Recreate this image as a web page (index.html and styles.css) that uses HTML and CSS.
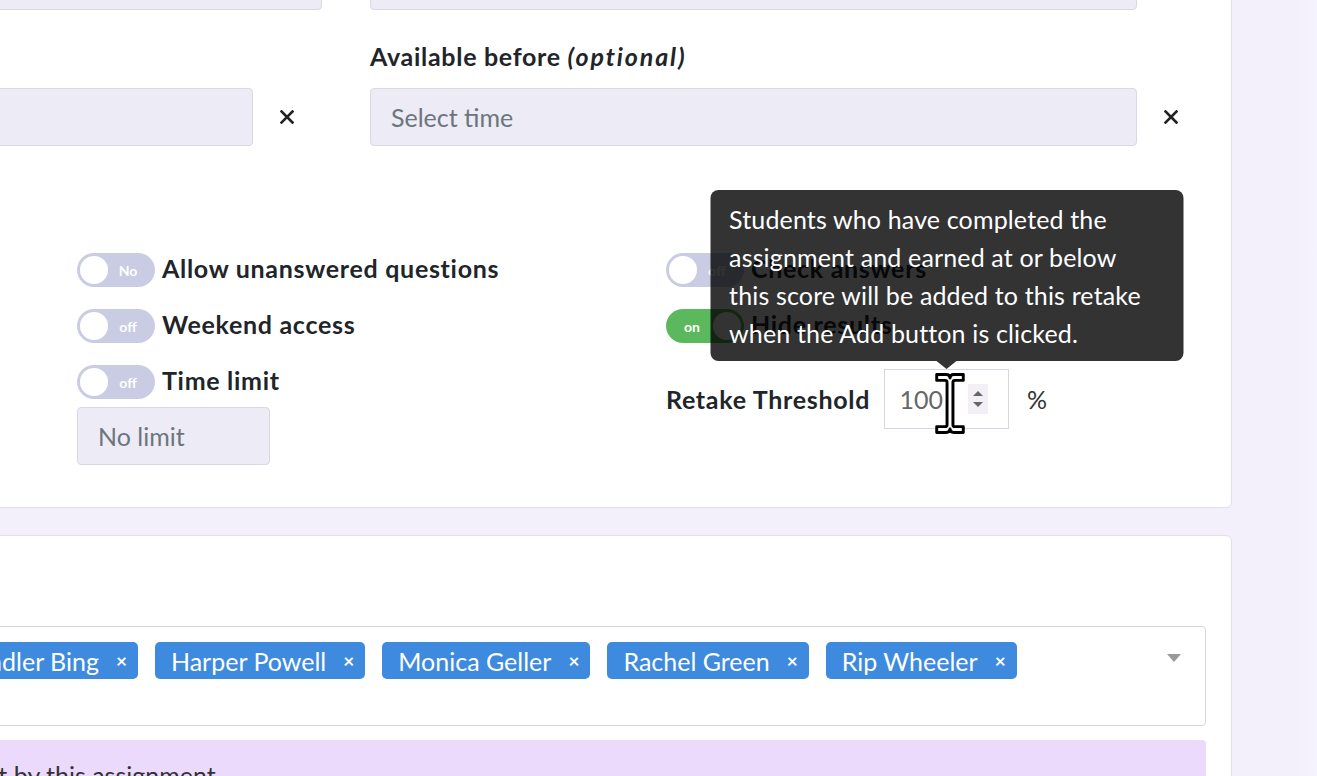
FILE: index.html
```html
<!DOCTYPE html>
<html lang="en">
<head>
<meta charset="utf-8">
<title>Retake settings</title>
<link rel="stylesheet" href="styles.css">
</head>
<body>
<div class="page">
  <main class="main">
    <section class="card card-settings">
      <div class="date-grid">
        <div class="cell"><div class="input input-full"></div></div>
        <div class="cell"><div class="input input-date"></div></div>
        <div class="cell"></div>
        <div class="cell"><div class="field-label">Available before <em>(optional)</em></div></div>
        <div class="cell field-row">
          <div class="input input-left"></div>
          <button class="clear" type="button" aria-label="Clear"><svg viewBox="0 0 14 14" width="14" height="14"><path d="M1.5 1.5 L12.5 12.5 M12.5 1.5 L1.5 12.5" stroke="#222" stroke-width="2.6" stroke-linecap="square"/></svg></button>
        </div>
        <div class="cell field-row">
          <div class="input input-date">Select time</div>
          <button class="clear" type="button" aria-label="Clear"><svg viewBox="0 0 14 14" width="14" height="14"><path d="M1.5 1.5 L12.5 12.5 M12.5 1.5 L1.5 12.5" stroke="#222" stroke-width="2.6" stroke-linecap="square"/></svg></button>
        </div>
      </div>

      <div class="options">
        <div class="opt-col">
          <div class="toggle-list">
            <div class="toggle-row"><span class="toggle"><span class="knob"></span><span class="toggle-text">No</span></span><span class="opt-label">Allow unanswered questions</span></div>
            <div class="toggle-row"><span class="toggle"><span class="knob"></span><span class="toggle-text">off</span></span><span class="opt-label">Weekend access</span></div>
            <div class="toggle-row"><span class="toggle"><span class="knob"></span><span class="toggle-text">off</span></span><span class="opt-label">Time limit</span></div>
          </div>
          <div class="input no-limit">No limit</div>
        </div>
        <div class="opt-col">
          <div class="toggle-list">
            <div class="toggle-row"><span class="toggle"><span class="knob"></span><span class="toggle-text">off</span></span><span class="opt-label">Check answers</span></div>
            <div class="toggle-row"><span class="toggle toggle-on"><span class="toggle-text">on</span><span class="knob"></span></span><span class="opt-label">Hide results</span></div>
          </div>
          <div class="retake">
            <span class="retake-label">Retake Threshold</span>
            <div class="num">
              <span class="num-value">100</span>
              <span class="spinner"><span class="up"></span><span class="down"></span></span>
              <div class="tooltip">Students who have completed the<br>assignment and earned at or below<br>this score will be added to this retake<br>when the Add button is clicked.</div>
              <svg class="cursor" viewBox="0 0 30 62" width="30" height="61"><path d="M1.5 1.5 H11 Q15 1.5 15 5 Q15 1.5 19 1.5 H28.5 V7.5 H20 Q18 7.5 18 9.5 V52.5 Q18 54.5 20 54.5 H28.5 V60.5 H19 Q15 60.5 15 57 Q15 60.5 11 60.5 H1.5 V54.5 H10 Q12 54.5 12 52.5 V9.5 Q12 7.5 10 7.5 H1.5 Z" fill="#fff" stroke="#000" stroke-width="3" stroke-linejoin="round"/></svg>
            </div>
            <span class="pct">%</span>
          </div>
        </div>
      </div>
    </section>

    <section class="card card-students">
      <div class="field-label">Students</div>
      <div class="multi">
        <span class="tag">Chandler Bing<span class="x">×</span></span>
        <span class="tag">Harper Powell<span class="x">×</span></span>
        <span class="tag">Monica Geller<span class="x">×</span></span>
        <span class="tag">Rachel Green<span class="x">×</span></span>
        <span class="tag">Rip Wheeler<span class="x">×</span></span>
        <span class="caret"></span>
      </div>
      <div class="note">The retake was set by this assignment.</div>
    </section>
  </main>
</div>
</body>
</html>
```

FILE: styles.css
```css
html, body {
  margin: 0;
  padding: 0;
}
body {
  width: 1317px;
  height: 776px;
  overflow: hidden;
  background: linear-gradient(to right, #f3f0fc 0, #f3f0fc 1295px, #f5f3fd 1317px);
  font-family: Lato, "Liberation Sans", sans-serif;
  color: #212529;
}
.page {
  display: flex;
  margin-left: -330px;
  margin-top: -78px;
}
.main {
  width: 1562px;
  flex: none;
}
.card {
  background: #fff;
  border: 1px solid #e2def0;
  border-radius: 6px;
  box-sizing: border-box;
}
.card-settings {
  padding: 29px 42px 42px 39px;
}
.card-students {
  margin-top: 27px;
  padding: 40px 25px 30px 39px;
}

/* date fields */
.date-grid {
  display: grid;
  grid-template-columns: 612px 1fr;
  column-gap: 48px;
}
.field-row {
  display: flex;
  align-items: center;
}
.field-label {
  font-size: 25px;
  line-height: 30px;
  font-weight: 700;
  letter-spacing: 0.7px;
  color: #212529;
}
.field-label em {
  font-style: italic;
  letter-spacing: 1.9px;
}
.date-grid .field-label {
  margin-top: 31px;
  margin-bottom: 17px;
}
.input {
  height: 58px;
  box-sizing: border-box;
  background: #ecebf6;
  border: 1px solid #d9d8e4;
  border-radius: 4px;
  display: flex;
  align-items: center;
  padding: 0 20px;
  font-size: 25px;
  color: #6c757d;
  flex: none;
}
.input-full { width: 612px; }
.input-date { width: 767px; }
.input-left { width: 543px; }
.clear {
  width: 36px;
  height: 36px;
  margin-left: 16px;
  padding: 0;
  border: 0;
  background: transparent;
  display: flex;
  align-items: center;
  justify-content: center;
  flex: none;
}

/* toggles */
.options {
  display: grid;
  grid-template-columns: 589px 1fr;
  margin: 107px 0 0 367px;
}
.opt-col {
  display: flex;
  flex-direction: column;
  align-items: flex-start;
}
.toggle-list {
  display: flex;
  flex-direction: column;
  gap: 22px;
}
.toggle-row {
  display: flex;
  align-items: center;
  gap: 7px;
  height: 34px;
  font-size: 25px;
  font-weight: 700;
  letter-spacing: 0.7px;
  color: #212529;
}
.opt-label {
  padding-bottom: 5px;
}
.toggle {
  width: 78px;
  height: 34px;
  border-radius: 17px;
  background: #c9cce3;
  display: flex;
  align-items: center;
  box-sizing: border-box;
  padding: 0 3px;
  flex: none;
  letter-spacing: 0;
}
.knob {
  width: 28px;
  height: 28px;
  border-radius: 50%;
  background: #fff;
  flex: none;
}
.toggle-text {
  flex: 1;
  text-align: center;
  font-size: 14px;
  font-weight: 700;
  color: #fff;
  padding-right: 4px;
}
.toggle-on {
  background: #5cb85c;
}
.toggle-on .toggle-text {
  padding: 0 0 0 2px;
}
.no-limit {
  width: 193px;
  margin-top: 8px;
}

/* retake threshold */
.retake {
  display: flex;
  align-items: center;
  margin-top: 26px;
}
.retake-label {
  font-size: 25px;
  font-weight: 700;
  letter-spacing: 0.7px;
}
.num {
  position: relative;
  margin-left: 14px;
  width: 125px;
  height: 60px;
  box-sizing: border-box;
  border: 1px solid #d8d6e0;
  background: #fff;
  display: flex;
  align-items: center;
  justify-content: flex-end;
  padding-right: 20px;
}
.num-value {
  font-size: 25px;
  color: #666;
}
.spinner {
  margin-left: 25px;
  width: 20px;
  height: 30px;
  background: #f2eff5;
  display: flex;
  flex-direction: column;
  align-items: center;
  justify-content: center;
  gap: 6px;
}
.spinner .up {
  width: 0;
  height: 0;
  border-left: 5px solid transparent;
  border-right: 5px solid transparent;
  border-bottom: 5px solid #666;
}
.spinner .down {
  width: 0;
  height: 0;
  border-left: 5px solid transparent;
  border-right: 5px solid transparent;
  border-top: 5px solid #666;
}
.pct {
  margin-left: 18px;
  font-size: 25px;
  color: #333;
}
.tooltip {
  position: absolute;
  bottom: calc(100% + 9px);
  left: 50%;
  transform: translateX(-50%);
  width: 473px;
  box-sizing: border-box;
  padding: 10px 19px 9px;
  background: rgba(0, 0, 0, 0.8);
  color: #fff;
  border-radius: 8px;
  font-size: 25px;
  letter-spacing: 0.15px;
  line-height: 38px;
  white-space: nowrap;
}
.tooltip::after {
  content: "";
  position: absolute;
  top: 100%;
  left: 50%;
  margin-left: -10px;
  border-left: 10px solid transparent;
  border-right: 10px solid transparent;
  border-top: 8px solid rgba(0, 0, 0, 0.8);
}
.cursor {
  position: absolute;
  left: 50px;
  top: 3px;
}

/* students */
.card-students .field-label {
  margin-bottom: 20px;
}
.multi {
  position: relative;
  min-height: 100px;
  box-sizing: border-box;
  border: 1px solid #d9d6e3;
  border-radius: 4px;
  padding: 15px 60px 15px 218px;
  display: flex;
  flex-wrap: wrap;
  align-content: flex-start;
  gap: 17px;
}
.tag {
  height: 37px;
  box-sizing: border-box;
  background: #3d8ade;
  color: #fff;
  border-radius: 5px;
  display: flex;
  align-items: center;
  padding: 0 11px 0 16px;
  font-size: 25px;
}
.tag .x {
  margin-left: 17px;
  font-size: 19px;
  font-weight: 700;
}
.caret {
  position: absolute;
  right: 24px;
  top: 27px;
  width: 0;
  height: 0;
  border-left: 7px solid transparent;
  border-right: 7px solid transparent;
  border-top: 8px solid #999;
}
.note {
  margin-top: 14px;
  background: #ecdafd;
  border-radius: 4px;
  padding: 20px 16px 20px 93px;
  font-size: 25px;
  line-height: 30px;
  color: #333;
}
```
